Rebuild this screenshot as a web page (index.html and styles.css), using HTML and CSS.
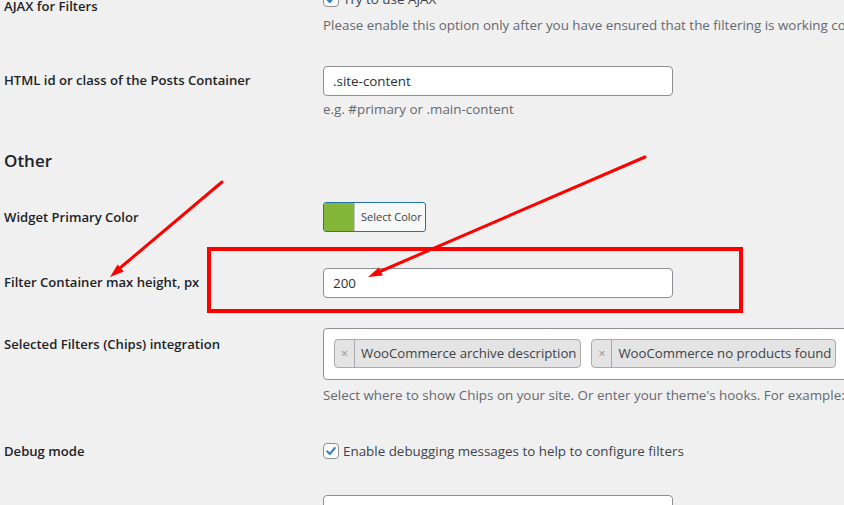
FILE: index.html
```html
<!DOCTYPE html>
<html>
<head>
<meta charset="utf-8">
<link rel="stylesheet" href="styles.css">
</head>
<body>
<div class="page">
  <div class="row row-ajax">
    <div class="label label-ajax">AJAX for Filters</div>
    <div class="field">
      <label class="check-line"><span class="checkbox"><svg viewBox="0 0 16 16" width="16" height="16"><path d="M3.6 8.4 L6.6 11.4 L12.4 4.6" fill="none" stroke="#3582c4" stroke-width="2.4" stroke-linecap="round" stroke-linejoin="round"/></svg></span>Try to use AJAX</label>
      <p class="desc desc-ajax">Please enable this option only after you have ensured that the filtering is working correctly without AJAX</p>
    </div>
  </div>

  <div class="row row-container">
    <div class="label label-input">HTML id or class of the Posts Container</div>
    <div class="field">
      <div class="text-input">.site-content</div>
      <p class="desc desc-input">e.g. #primary or .main-content</p>
    </div>
  </div>

  <h2 class="section-title">Other</h2>

  <div class="row row-color">
    <div class="label label-color">Widget Primary Color</div>
    <div class="field">
      <div class="color-btn"><span class="swatch"></span><span class="color-text">Select Color</span></div>
    </div>
  </div>

  <div class="row row-height">
    <div class="label label-input">Filter Container max height, px</div>
    <div class="field">
      <div class="text-input">200</div>
    </div>
  </div>

  <div class="row row-chips">
    <div class="label label-chips">Selected Filters (Chips) integration</div>
    <div class="field">
      <div class="chips-box">
        <span class="chip"><span class="chip-x">×</span><span class="chip-text">WooCommerce archive description</span></span>
        <span class="chip"><span class="chip-x">×</span><span class="chip-text">WooCommerce no products found</span></span>
      </div>
      <p class="desc desc-chips">Select where to show Chips on your site. Or enter your theme's hooks. For example: before_main_content</p>
    </div>
  </div>

  <div class="row row-debug">
    <div class="label label-debug">Debug mode</div>
    <div class="field">
      <label class="check-line"><span class="checkbox"><svg viewBox="0 0 16 16" width="16" height="16"><path d="M3.6 8.4 L6.6 11.4 L12.4 4.6" fill="none" stroke="#3582c4" stroke-width="2.4" stroke-linecap="round" stroke-linejoin="round"/></svg></span>Enable debugging messages to help to configure filters</label>
    </div>
  </div>

  <div class="row row-last">
    <div class="label"></div>
    <div class="field">
      <div class="text-input"></div>
    </div>
  </div>
</div>

<svg class="annotations" width="844" height="505" viewBox="0 0 844 505">
  <rect x="209" y="249" width="532" height="62" fill="none" stroke="#ff0000" stroke-width="4"/>
  <line x1="222" y1="182" x2="120" y2="268" stroke="#ff0000" stroke-width="3" stroke-linecap="round"/>
  <polygon points="110,277 117.6,264.4 123.8,271.6" fill="#ff0000"/>
  <line x1="645" y1="157" x2="380" y2="271.5" stroke="#ff0000" stroke-width="3" stroke-linecap="round"/>
  <polygon points="368,277 378.9,267.4 382.8,275.6" fill="#ff0000"/>
</svg>
</body>
</html>
```

FILE: styles.css
```css
html, body {
  margin: 0;
  padding: 0;
}
body {
  background: #f0f0f1;
  color: #1d2327;
  font-family: "Open Sans", "Noto Sans", sans-serif;
  font-size: 13.4px;
  line-height: 20px;
  width: 844px;
  height: 505px;
  overflow: hidden;
  position: relative;
}
.page {
  padding-left: 4px;
  margin-top: -11px;
}
.row {
  display: grid;
  grid-template-columns: 319px 1fr;
}
.label {
  font-size: 13.1px;
  font-weight: 600;
  color: #1d2327;
  white-space: nowrap;
}
.field {
  min-width: 0;
  white-space: nowrap;
}
.label-ajax { padding-top: 7px; }
.label-input { padding-top: 4px; }
.label-color { padding-top: 5px; }
.label-chips { padding-top: 6px; }
.label-debug { padding-top: 0; }

.check-line {
  display: flex;
  align-items: center;
  gap: 4px;
  height: 20px;
  color: #3c434a;
}
.checkbox {
  width: 16px;
  height: 16px;
  box-sizing: border-box;
  border: 1px solid #8c8f94;
  border-radius: 4px;
  background: #fff;
  display: flex;
  align-items: center;
  justify-content: center;
  flex: none;
}
.checkbox svg {
  display: block;
  width: 14px;
  height: 14px;
}
.desc {
  margin: 0;
  color: #646970;
}
.desc-ajax { margin-top: 6px; }
.desc-input { margin-top: 3px; }
.desc-chips { margin-top: 5px; }

.row-container { margin-top: 31px; }
.text-input {
  width: 350px;
  height: 30px;
  box-sizing: border-box;
  border: 1px solid #8c8f94;
  border-radius: 4px;
  background: #fff;
  padding: 0 9px;
  line-height: 28px;
  color: #2c3338;
}

.section-title {
  margin: 30px 0 0;
  font-size: 17px;
  line-height: 24px;
  font-weight: 600;
  color: #1d2327;
}

.row-color { margin-top: 29px; }
.color-btn {
  display: flex;
  width: 103px;
  height: 30px;
  box-sizing: border-box;
  border: 1px solid #2271b1;
  border-radius: 3px;
  overflow: hidden;
  background: #f6f7f7;
}
.swatch {
  width: 30px;
  background: #84b639;
  border-right: 1px solid #c3c4c7;
  flex: none;
}
.color-text {
  font-size: 11px;
  line-height: 28px;
  color: #3c434a;
  padding-left: 6px;
}

.row-height { margin-top: 36px; }

.row-chips { margin-top: 30px; }
.chips-box {
  width: 560px;
  box-sizing: border-box;
  border: 1px solid #8c8f94;
  border-radius: 4px;
  background: #fff;
  padding: 10px 10px 11px;
  display: flex;
  gap: 10px;
}
.chip {
  display: flex;
  height: 29px;
  box-sizing: border-box;
  border: 1px solid #aaaaaa;
  border-radius: 4px;
  background: #e4e4e4;
  flex: none;
}
.chip-x {
  width: 19px;
  border-right: 1px solid #aaaaaa;
  color: #999999;
  font-size: 13px;
  line-height: 27px;
  text-align: center;
}
.chip-text {
  font-size: 13.2px;
  line-height: 27px;
  color: #3c434a;
  padding: 0 4px 0 6px;
}

.row-debug { margin-top: 36px; }
.row-last { margin-top: 34px; }

.annotations {
  position: absolute;
  left: 0;
  top: 0;
  pointer-events: none;
}
```
